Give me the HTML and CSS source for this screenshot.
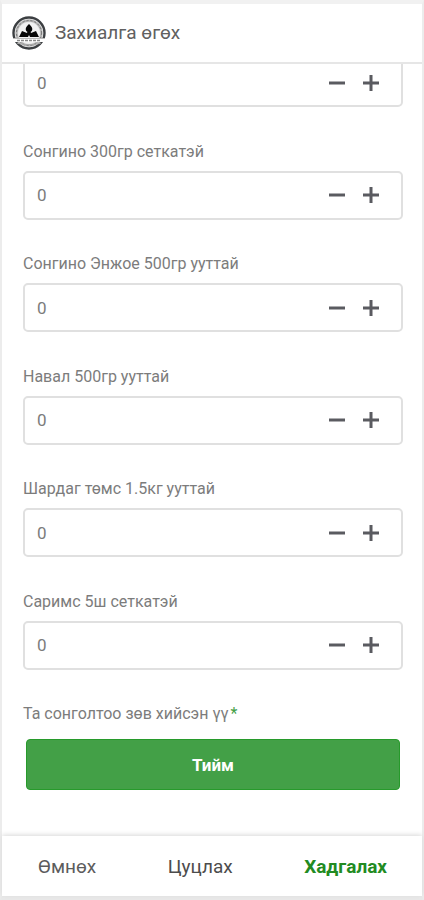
FILE: index.html
```html
<!DOCTYPE html>
<html lang="mn">
<head>
<meta charset="utf-8">
<meta name="viewport" content="width=device-width, initial-scale=1">
<title>Захиалга өгөх</title>
<link rel="stylesheet" href="styles.css">
</head>
<body>
<svg class="defs" width="0" height="0" aria-hidden="true">
  <symbol id="minus" viewBox="0 0 18 18"><path d="M1 9h16" stroke="currentColor" stroke-width="3"/></symbol>
  <symbol id="plus" viewBox="0 0 18 18"><path d="M1 9h16M9 1v16" stroke="currentColor" stroke-width="3"/></symbol>
</svg>
<div class="app">
  <header class="header">
    <svg class="logo" viewBox="0 0 36 36" aria-hidden="true">
      <circle cx="18" cy="18" r="15.5" fill="#fff" stroke="#3c3f42" stroke-width="2.4"/>
      <circle cx="18" cy="18" r="12.5" fill="#e8e8e8" stroke="#b4b4b4" stroke-width="2.4"/>
      <circle cx="18" cy="18" r="12.5" fill="none" stroke="#777" stroke-width="1" stroke-dasharray="2 2"/>
      <circle cx="18" cy="18" r="10.5" fill="#f2f2f2"/>
      <path d="M18 9c2 2 4 4 3 6.500-1 2-5 2-6 0-1-2.500 1-4.500 3-6.500z" fill="#080808"/>
      <path d="M17 15h2l1 3 5-2 3 6h-9l-1-2-1 2H8l3-6 5 2z" fill="#080808"/>
      <path d="M1 23h34l-1 4H2z" fill="#fff"/>
      <path d="M2 23.500h32" stroke="#bbb"/>
      <path d="M6 25.500h24" stroke="#888" stroke-width="1.500" stroke-dasharray="3 1"/>
      <path d="M6 28c5 2 19 2 24 0" fill="none" stroke="#aaa"/>
    </svg>
    <h1 class="title">Захиалга өгөх</h1>
  </header>
  <main class="content">
    <form class="form" id="order">
      <div class="fields">
        <div class="field">
          <div class="stepper"><input class="value" type="text" inputmode="numeric" value="0" aria-label="Тоо"><button class="step" type="button" aria-label="Хасах"><svg class="icon"><use href="#minus"/></svg></button><button class="step" type="button" aria-label="Нэмэх"><svg class="icon"><use href="#plus"/></svg></button></div>
        </div>
        <div class="field">
          <label class="label" for="q1">Сонгино 300гр сеткатэй</label>
          <div class="stepper"><input class="value" id="q1" type="text" inputmode="numeric" value="0"><button class="step" type="button" aria-label="Хасах"><svg class="icon"><use href="#minus"/></svg></button><button class="step" type="button" aria-label="Нэмэх"><svg class="icon"><use href="#plus"/></svg></button></div>
        </div>
        <div class="field">
          <label class="label" for="q2">Сонгино Энжое 500гр ууттай</label>
          <div class="stepper"><input class="value" id="q2" type="text" inputmode="numeric" value="0"><button class="step" type="button" aria-label="Хасах"><svg class="icon"><use href="#minus"/></svg></button><button class="step" type="button" aria-label="Нэмэх"><svg class="icon"><use href="#plus"/></svg></button></div>
        </div>
        <div class="field">
          <label class="label" for="q3">Навал 500гр ууттай</label>
          <div class="stepper"><input class="value" id="q3" type="text" inputmode="numeric" value="0"><button class="step" type="button" aria-label="Хасах"><svg class="icon"><use href="#minus"/></svg></button><button class="step" type="button" aria-label="Нэмэх"><svg class="icon"><use href="#plus"/></svg></button></div>
        </div>
        <div class="field">
          <label class="label" for="q4">Шардаг төмс 1.5кг ууттай</label>
          <div class="stepper"><input class="value" id="q4" type="text" inputmode="numeric" value="0"><button class="step" type="button" aria-label="Хасах"><svg class="icon"><use href="#minus"/></svg></button><button class="step" type="button" aria-label="Нэмэх"><svg class="icon"><use href="#plus"/></svg></button></div>
        </div>
        <div class="field">
          <label class="label" for="q5">Саримс 5ш сеткатэй</label>
          <div class="stepper"><input class="value" id="q5" type="text" inputmode="numeric" value="0"><button class="step" type="button" aria-label="Хасах"><svg class="icon"><use href="#minus"/></svg></button><button class="step" type="button" aria-label="Нэмэх"><svg class="icon"><use href="#plus"/></svg></button></div>
        </div>
      </div>
      <div class="confirm">
        <label class="label" for="yes">Та сонголтоо зөв хийсэн үү<span class="required">*</span></label>
        <button class="yes" id="yes" type="button">Тийм</button>
      </div>
    </form>
  </main>
  <footer class="footer">
    <button class="action" type="button">Өмнөх</button>
    <button class="action cancel" type="button">Цуцлах</button>
    <button class="action save" type="submit" form="order">Хадгалах</button>
  </footer>
</div>
</body>
</html>
```
FILE: styles.css
```css
* {
  box-sizing: border-box;
}

body {
  margin: 0;
  background: #fff;
  font-family: Roboto, "Noto Sans", sans-serif;
  color: #7c7c7c;
}

button,
input {
  font: inherit;
  color: inherit;
  margin: 0;
  padding: 0;
  border: 0;
  background: none;
}

button {
  cursor: pointer;
}

.defs {
  position: absolute;
}

.app {
  display: flex;
  flex-direction: column;
  height: 100vh;
  border: 2px solid #ececec;
  border-top: 4px solid #f1f1f1;
  border-bottom: 4px solid #e9e9e9;
}

.header {
  flex: none;
  display: flex;
  align-items: center;
  gap: 8px;
  height: 60px;
  padding: 0 9px;
  border-bottom: 2px solid #e6e6e6;
}

.logo {
  width: 36px;
  height: 36px;
}

.title {
  margin: 0;
  font-size: 19px;
  line-height: 24px;
  font-weight: 400;
  color: #606060;
}

.content {
  flex: 1;
  min-height: 0;
  overflow: hidden;
}

.form {
  display: flex;
  flex-direction: column;
  gap: 34px;
  height: 100%;
  padding: 0 19px 46px 21px;
}

.fields {
  flex: 1;
  display: flex;
  flex-direction: column;
  justify-content: space-between;
  margin-top: -6px;
}

.field {
  display: flex;
  flex-direction: column;
  gap: 9px;
}

.label {
  font-size: 16px;
  line-height: 20px;
}

.required {
  margin-left: 2px;
  color: #43a047;
}

.stepper {
  display: flex;
  align-items: center;
  height: 49px;
  padding: 0 13px 0 12px;
  border: 2px solid #e0e0e0;
  border-radius: 5px;
}

.value {
  flex: 1;
  min-width: 0;
  height: 100%;
  font-size: 17px;
  outline: 0;
}

.step {
  display: flex;
  align-items: center;
  justify-content: center;
  width: 34px;
  height: 34px;
  color: #5a5b60;
}

.icon {
  width: 18px;
  height: 18px;
}

.confirm {
  display: flex;
  flex-direction: column;
  gap: 15px;
}

.yes {
  height: 51px;
  margin: 0 3px;
  border: 1px solid #279a2b;
  border-radius: 4px;
  background: #43a047;
  color: #fff;
  font-size: 17px;
  font-weight: 700;
}

.footer {
  flex: none;
  display: flex;
  align-items: center;
  justify-content: space-between;
  height: 60px;
  padding: 0 35px 0 36px;
  background: #fff;
  box-shadow: 0 -1px 5px #d8d8d8;
}

.action {
  height: 40px;
  font-size: 19px;
  color: #5c5c5c;
}

.cancel {
  color: #4c4c4c;
}

.save {
  color: #228b22;
  font-weight: 700;
}
```
